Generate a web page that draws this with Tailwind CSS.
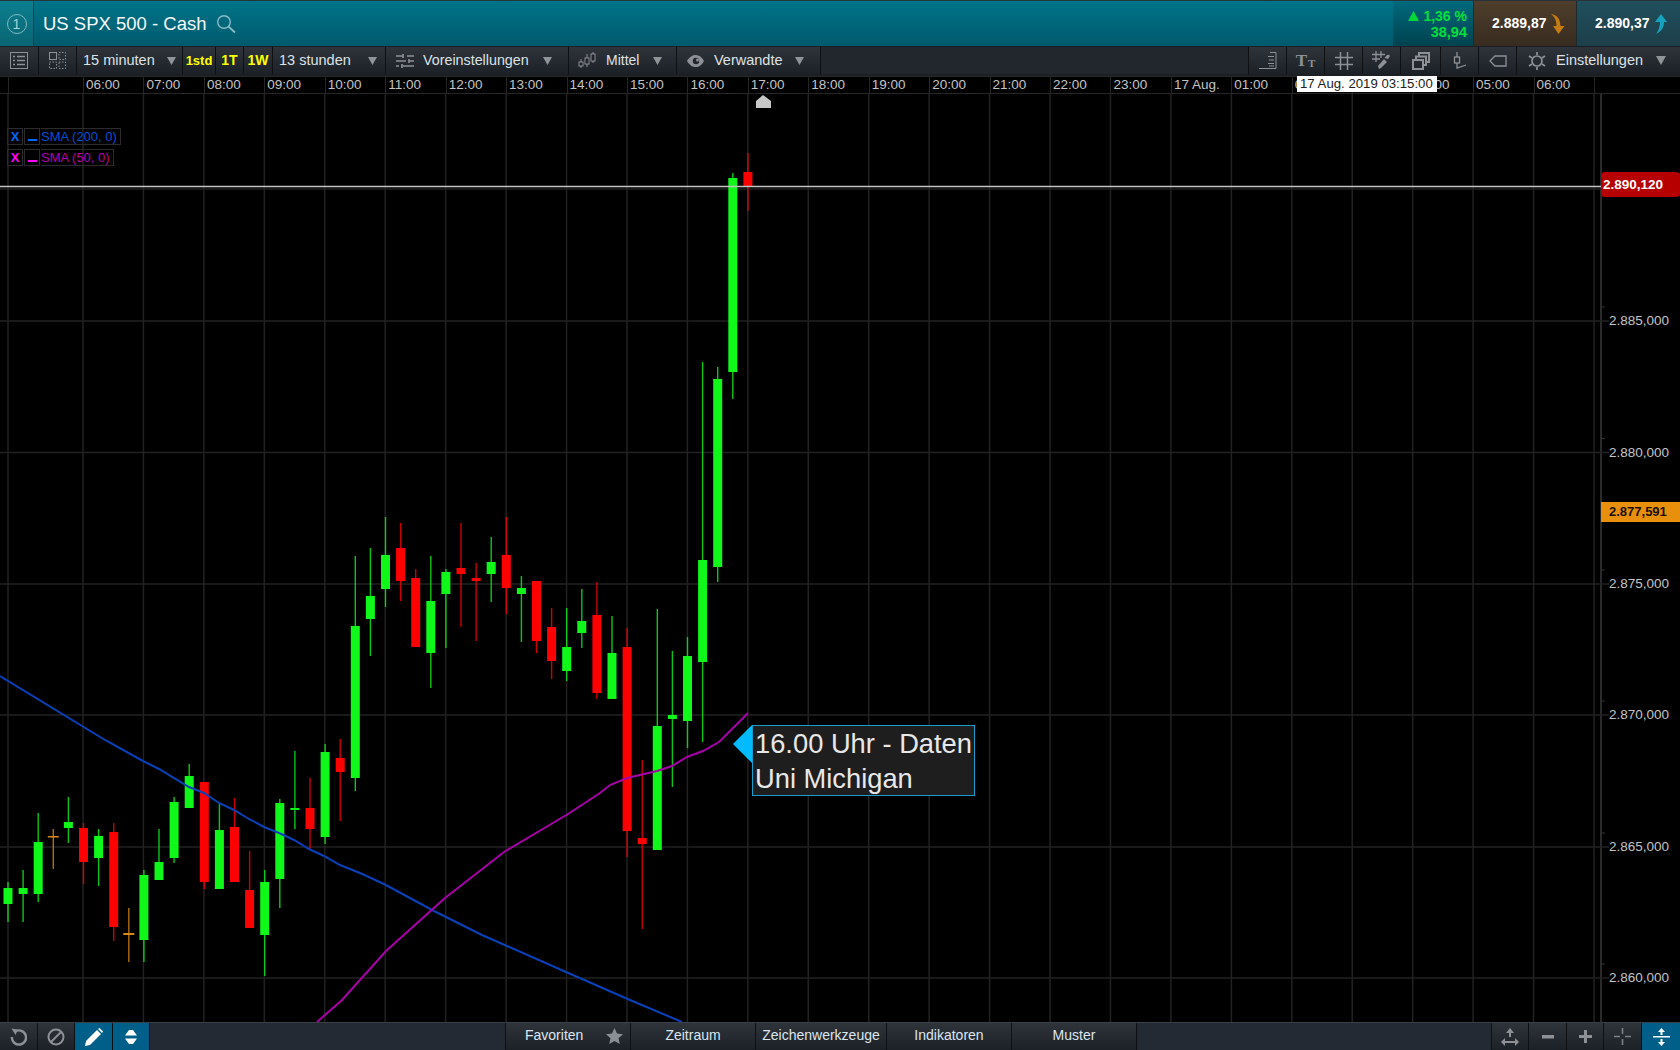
<!DOCTYPE html>
<html lang="de">
<head>
    <meta charset="UTF-8">
    <title>US SPX 500 - Cash</title>
    <script src="https://cdn.jsdelivr.net/npm/@tailwindcss/browser@4"></script>
</head>
<body class="bg-black overflow-hidden font-['Liberation_Sans',Arial,sans-serif]">
<div class="w-[1680px] h-[1050px] flex flex-col">

    <!-- header -->
    <div class="h-[46px] flex border-t border-[#26343a] border-b-[#111] bg-linear-to-b from-[#007489] to-[#005a6d] text-white">
        <div class="w-[34px] flex items-center justify-center border-r border-[#0c3f4b] bg-linear-to-b from-[#0c7f8f] to-[#0a6573]">
            <div class="w-[20px] h-[20px] rounded-full border-[1.5px] border-[#7fb8c0] text-[#a8d2d8] text-[14px] flex items-center justify-center leading-none">1</div>
        </div>
        <div class="pl-[9px] flex items-center text-[18.5px] text-[#f4fafb]">US SPX 500 - Cash</div>
        <svg class="ml-[9px] self-center" width="20" height="20" viewBox="0 0 20 20" fill="none" stroke="#8cbcc4" stroke-width="1.4"><circle cx="8" cy="8" r="6.3"/><path d="M12.6 12.6 L19 18.5" stroke-width="1.8"/></svg>
        <div class="flex-1"></div>
        <div class="w-[81px] flex flex-col justify-center items-end pr-[6px] border-r border-[#1a2a2e] bg-linear-to-b from-[#006a7d] to-[#00424f] text-[#00e03c] font-bold text-[14.5px] leading-[16px]">
            <div class="flex items-center gap-[4px] text-[14px]"><svg width="11" height="10" viewBox="0 0 11 10"><path d="M5.5 0 L11 10 L0 10 Z" fill="#00d838"/></svg>1,36 %</div>
            <div>38,94</div>
        </div>
        <div class="w-[103px] flex items-center pl-[18px] gap-[3px] border-r border-[#1a2a2e] bg-linear-to-b from-[#4e3e2b] to-[#382c20] font-bold text-[14px]">
            2.889,87
            <svg width="15" height="20" viewBox="0 0 15 20"><path d="M1 0 C7 1 10 4 10.5 12 L14.5 12 L8.5 20 L3 12 L6.5 12 C6.5 7 5 3 1 0 Z" fill="#c67c12"/></svg>
        </div>
        <div class="flex-1 max-w-[103px] flex items-center pl-[18px] gap-[4px] bg-linear-to-b from-[#204f5d] to-[#1d3f4a] font-bold text-[14px]">
            2.890,37
            <svg width="13" height="20" viewBox="0 0 13 20"><path d="M7 0 L13 8 L10 8 C10 13 8 17 2 20 C5 16 6 12 6 8 L1 8 Z" fill="#16a3bd"/></svg>
        </div>
    </div>

    <!-- toolbar -->
    <div class="h-[30px] flex pt-[1px] bg-[#1b1f25] border-b-2 border-[#1c2025] text-[14.5px] text-[#dde2e6]">
        <div class="w-[39px] flex items-center justify-center border-r border-[#0d0f12] bg-linear-to-b from-[#2f343b] to-[#1c2027]">
            <svg width="18" height="17" viewBox="0 0 18 17" fill="none" stroke="#8d9196"><rect x="0.5" y="0.5" width="17" height="16"/><path d="M3 4.5h2M7 4.5h8M3 8.5h2M7 8.5h8M3 12.5h2M7 12.5h8" stroke-width="1.4"/></svg>
        </div>
        <div class="w-[38px] flex items-center justify-center border-r border-[#0d0f12] bg-linear-to-b from-[#2f343b] to-[#1c2027]">
            <svg width="17" height="17" viewBox="0 0 17 17" fill="none" stroke="#8d9196"><rect x="0.5" y="0.5" width="7" height="7"/><path d="M10 .5h6.5v7H10zM.5 10h7v6.500H.5zM10 10h6.500v6.500H10z" stroke-dasharray="1.500 1.500"/></svg>
        </div>
        <div class="w-[106px] flex items-center justify-between pl-[6px] pr-[6px] border-r border-[#0d0f12] bg-linear-to-b from-[#2f343b] to-[#1c2027]">
            15 minuten
            <svg width="9" height="8" viewBox="0 0 9 8"><path d="M0 0h9L4.500 8z" fill="#8f9499"/></svg>
        </div>
        <div class="w-[33px] flex items-center justify-center border-r border-[#0d0f12] bg-linear-to-b from-[#2f343b] to-[#1c2027] text-[#ffff00] font-bold text-[13px]">1std</div>
        <div class="w-[28px] flex items-center justify-center border-r border-[#0d0f12] bg-linear-to-b from-[#2f343b] to-[#1c2027] text-[#ffff00] font-bold text-[14px]">1T</div>
        <div class="w-[29px] flex items-center justify-center border-r border-[#0d0f12] bg-linear-to-b from-[#2f343b] to-[#1c2027] text-[#ffff00] font-bold text-[14px]">1W</div>
        <div class="w-[113px] flex items-center justify-between pl-[6px] pr-[8px] border-r border-[#0d0f12] bg-linear-to-b from-[#2f343b] to-[#1c2027]">
            13 stunden
            <svg width="9" height="8" viewBox="0 0 9 8"><path d="M0 0h9L4.500 8z" fill="#8f9499"/></svg>
        </div>
        <div class="w-[183px] flex items-center pl-[10px] gap-[9px] border-r border-[#0d0f12] bg-linear-to-b from-[#2f343b] to-[#1c2027] text-[14.3px]">
            <svg width="18" height="16" viewBox="0 0 18 16" fill="none" stroke="#8d9196" stroke-width="2"><path d="M0 3h7M11 3h7M7 1v4M0 8h10M14 8h4M13 6v4M0 13h3M7 13h11M6 11v4" stroke-width="1.700"/></svg>
            <span>Voreinstellungen</span>
            <svg class="ml-[5px]" width="9" height="8" viewBox="0 0 9 8"><path d="M0 0h9L4.500 8z" fill="#8f9499"/></svg>
        </div>
        <div class="w-[108px] flex items-center pl-[9px] gap-[10px] border-r border-[#0d0f12] bg-linear-to-b from-[#2f343b] to-[#1c2027] text-[14px]">
            <svg width="18" height="17" viewBox="0 0 18 17" fill="none" stroke="#8d9196"><path d="M3 7v9M9 2v13M15 0v11"/><rect x="1" y="10" width="4" height="4" fill="#1f2329"/><rect x="7" y="6" width="4" height="6" fill="#1f2329"/><rect x="13" y="2" width="4" height="7" fill="#1f2329"/></svg>
            <span>Mittel</span>
            <svg class="ml-[4px]" width="9" height="8" viewBox="0 0 9 8"><path d="M0 0h9L4.500 8z" fill="#8f9499"/></svg>
        </div>
        <div class="w-[144px] flex items-center pl-[10px] gap-[10px] border-r border-[#0d0f12] bg-linear-to-b from-[#2f343b] to-[#1c2027]">
            <svg width="17" height="12" viewBox="0 0 17 12"><path d="M0 6 C3 1 6 0 9 0 C12 0 15 2 17 6 C15 10 12 12 9 12 C6 12 3 11 0 6 Z" fill="#8d9196"/><circle cx="9" cy="6" r="3.200" fill="#23272d"/><circle cx="10.500" cy="5" r="1.500" fill="#8d9196"/></svg>
            <span>Verwandte</span>
            <svg class="ml-[2px]" width="9" height="8" viewBox="0 0 9 8"><path d="M0 0h9L4.500 8z" fill="#8f9499"/></svg>
        </div>
        <div class="flex-1 border-r border-[#0d0f12] bg-[#22272e]"></div>
        <div class="w-[38px] flex items-center justify-center border-r border-[#0d0f12] bg-linear-to-b from-[#2f343b] to-[#1c2027]">
            <svg width="18" height="17" viewBox="0 0 18 17" fill="none" stroke="#8d9196"><path d="M0 16.500h17V.500h-6M9 4.500h6M10 8h5M9 11.500h6M10 14h5"/></svg>
        </div>
        <div class="w-[38px] flex items-end justify-center pb-[5px] gap-[1px] border-r border-[#0d0f12] bg-linear-to-b from-[#2f343b] to-[#1c2027] text-[#8d9196] font-bold font-['Liberation_Serif',serif] leading-none">
            <span class="text-[17px]">T</span><span class="text-[11px]">T</span>
        </div>
        <div class="w-[38px] flex items-center justify-center border-r border-[#0d0f12] bg-linear-to-b from-[#2f343b] to-[#1c2027]">
            <svg width="18" height="18" viewBox="0 0 18 18" fill="none" stroke="#8d9196" stroke-width="1.500"><path d="M5.500 0v18M12.500 0v18M0 5.500h18M0 12.500h18"/></svg>
        </div>
        <div class="w-[38px] flex items-center justify-center border-r border-[#0d0f12] bg-linear-to-b from-[#2f343b] to-[#1c2027]">
            <svg width="19" height="19" viewBox="0 0 19 19" fill="none" stroke="#8d9196" stroke-width="1.300"><path d="M4 0v11M9 0v7M0 3.500h13M0 8h8" /><path d="M7 18 L6 15 L12 8 L15 11 L9 17 Z" fill="#8d9196" stroke="none"/><path d="M12.500 7 L15 4 Q17 3 18 5 L16 8 Z" fill="#8d9196" stroke="none"/></svg>
        </div>
        <div class="w-[40px] flex items-center justify-center border-r border-[#0d0f12] bg-linear-to-b from-[#2f343b] to-[#1c2027]">
            <svg width="18" height="18" viewBox="0 0 18 18" fill="none" stroke="#8d9196" stroke-width="2"><rect x="1" y="8" width="10" height="9"/><path d="M4 7V4.500h10V13h-2M7 3.500V1h10v9h-2" /></svg>
        </div>
        <div class="w-[38px] flex items-center justify-center border-r border-[#0d0f12] bg-linear-to-b from-[#2f343b] to-[#1c2027]">
            <svg width="14" height="17" viewBox="0 0 14 17" fill="none" stroke="#8d9196" stroke-width="1.300"><path d="M4 0v5M4 11v5L13 13"/><rect x="1.500" y="5" width="5" height="6"/></svg>
        </div>
        <div class="w-[38px] flex items-center justify-center border-r border-[#0d0f12] bg-linear-to-b from-[#2f343b] to-[#1c2027]">
            <svg width="18" height="12" viewBox="0 0 18 12" fill="none" stroke="#8d9196" stroke-width="1.300"><path d="M17 1H6L1 6l5 5h11z"/></svg>
        </div>
        <div class="flex-1 max-w-[163px] flex items-center pl-[11px] pr-[14px] gap-[10px] bg-linear-to-b from-[#2f343b] to-[#1c2027]">
            <svg width="18" height="18" viewBox="0 0 18 18" fill="none" stroke="#8d9196" stroke-width="1.700"><circle cx="9" cy="9" r="5"/><path d="M9 0v3M9 15v3M1 4l3 2M14 12l3 2M1 14l3-2M14 6l3-2"/></svg>
            <span>Einstellungen</span>
            <div class="ml-auto w-0 h-0 border-x-[5px] border-x-transparent border-t-[9px] border-t-[#8f9499]"></div>
        </div>
    </div>

    <!-- chart -->
    <div class="flex-1 relative flex flex-col min-h-0">
        <div id="timeaxis" class="h-[18px] flex border-y border-[#262626] text-[13.5px] leading-[16px] text-[#c4c4c4]"></div>
        <div class="flex-1 relative min-h-0">
            <svg id="chart" class="absolute inset-0 w-full h-full" viewBox="0 94 1680 928"></svg>

            <!-- legend -->
            <div class="absolute left-[7px] top-[34px] flex flex-col gap-[4px] text-[13px] leading-[15px] font-normal">
                <div class="flex gap-[1px] text-[#0050d8]">
                    <div class="w-[16px] h-[17px] border border-[#2c2c2c] flex items-center justify-center font-bold text-[13px] text-[#0066ff]">X</div>
                    <div class="w-[16px] h-[17px] border border-[#2c2c2c] flex items-end justify-center pb-[3px]"><div class="w-[9px] h-[2px] bg-[#0066ff]"></div></div>
                    <div class="w-[80px] h-[17px] border border-[#2c2c2c] border-l-0 whitespace-nowrap">SMA (200, 0)</div>
                </div>
                <div class="flex gap-[1px] text-[#b400b4]">
                    <div class="w-[16px] h-[17px] border border-[#2c2c2c] flex items-center justify-center font-bold text-[13px] text-[#ff00ff]">X</div>
                    <div class="w-[16px] h-[17px] border border-[#2c2c2c] flex items-end justify-center pb-[3px]"><div class="w-[9px] h-[2px] bg-[#ff00ff]"></div></div>
                    <div class="w-[73px] h-[17px] border border-[#2c2c2c] border-l-0 whitespace-nowrap">SMA (50, 0)</div>
                </div>
            </div>

            <!-- last price tags -->
            <div class="absolute left-[1601px] top-[78px] w-[79px] h-[25px] rounded-[4px] bg-[#b60000] text-white font-bold text-[13.5px] leading-[25px] pl-[2px]">2.890,120</div>
            <div class="absolute left-[1601px] top-[408px] w-[79px] h-[20px] bg-[#e8900c] text-[#1a1206] font-bold text-[13px] leading-[20px] pl-[8px]">2.877,591</div>

            <!-- note -->
            <div class="absolute left-[733px] top-[631px] flex items-start">
                <svg class="mt-0" width="19" height="38" viewBox="0 0 19 38"><path d="M19 0 L0 19 L19 38 Z" fill="#00bbff"/></svg>
                <div class="w-[223px] h-[71px] border-[1.5px] border-[#1a9ccc] bg-[#1e1e1e] text-[#e8e8e8] text-[27.3px] leading-[35px] pl-[2px] whitespace-nowrap">16.00 Uhr - Daten<br>Uni Michigan</div>
            </div>
        </div>

        <!-- crosshair time -->
        <div class="absolute left-[1297px] top-0 w-[140px] h-[16px] bg-white text-[#222] text-[13.2px] leading-[16px] pl-[3px] whitespace-nowrap">17 Aug. 2019 03:15:00</div>
    </div>

    <!-- bottom bar -->
    <div class="h-[28px] flex bg-[#232a33] border-t border-[#3a4048] text-[14px] text-[#dbe6f0]">
        <div class="w-[38px] flex items-center justify-center border-r border-[#0d0f12] bg-linear-to-b from-[#2f343b] to-[#1c2027]">
            <svg width="17" height="18" viewBox="0 0 18 18" fill="none" stroke="#8d9196" stroke-width="2.600"><path d="M5 3.500 A7.500 7.500 0 1 1 2 9"/><path d="M1.500 0 L8 1 L6 7 Z" fill="#8d9196" stroke="none"/></svg>
        </div>
        <div class="w-[37px] flex items-center justify-center border-r border-[#0d0f12] bg-linear-to-b from-[#2f343b] to-[#1c2027]">
            <svg width="18" height="18" viewBox="0 0 18 18" fill="none" stroke="#8d9196" stroke-width="2"><circle cx="9" cy="9" r="7.500"/><path d="M4 14 L14 4"/></svg>
        </div>
        <div class="w-[38px] flex items-center justify-center border-r border-[#0d0f12] bg-[#005f88]">
            <svg width="18" height="18" viewBox="0 0 18 18" fill="#ffffff"><path d="M0 18 L1 13 L12 2 L16 6 L5 17 Z"/><path d="M13 1 L14.500 0 L18 3.500 L17 5 Z"/></svg>
        </div>
        <div class="w-[37px] flex items-center justify-center border-r border-[#0d0f12] bg-[#005f88]">
            <svg width="14" height="14" viewBox="0 0 14 14" fill="#ffffff"><path d="M5 0h4l4 5.500H1z"/><path d="M1 8.500h12L9 14H5z"/></svg>
        </div>
        <div class="w-[355px]"></div>
        <div class="w-[126px] flex items-center pl-[19px] pb-[2px] border-x border-[#0d0f12] bg-linear-to-b from-[#2f343b] to-[#1c2027]">
            Favoriten
            <svg class="ml-[23px]" width="17" height="16" viewBox="0 0 17 16"><path d="M8.500 0 L11 5.500 L17 6.200 L12.500 10.200 L13.800 16 L8.500 13 L3.200 16 L4.500 10.200 L0 6.200 L6 5.500 Z" fill="#8a8f94"/></svg>
        </div>
        <div class="w-[125px] flex items-center justify-center pb-[2px] border-r border-[#0d0f12] bg-linear-to-b from-[#2f343b] to-[#1c2027]">Zeitraum</div>
        <div class="w-[131px] flex items-center justify-center pb-[2px] border-r border-[#0d0f12] bg-linear-to-b from-[#2f343b] to-[#1c2027] whitespace-nowrap">Zeichenwerkzeuge</div>
        <div class="w-[125px] flex items-center justify-center pb-[2px] border-r border-[#0d0f12] bg-linear-to-b from-[#2f343b] to-[#1c2027]">Indikatoren</div>
        <div class="w-[125px] flex items-center justify-center pb-[2px] border-r border-[#0d0f12] bg-linear-to-b from-[#2f343b] to-[#1c2027]">Muster</div>
        <div class="flex-1"></div>
        <div class="w-[38px] flex items-center justify-center border-x border-[#0d0f12] bg-linear-to-b from-[#2f343b] to-[#1c2027]">
            <svg width="18" height="18" viewBox="0 0 18 18" fill="#8d9196"><path d="M9 0 L13 5 L10 5 L10 9 L8 9 L8 5 L5 5 Z"/><path d="M0 14 L4 10 L4 13 L14 13 L14 10 L18 14 L14 18 L14 15 L4 15 L4 18 Z"/></svg>
        </div>
        <div class="w-[38px] flex items-center justify-center border-r border-[#0d0f12] bg-linear-to-b from-[#2f343b] to-[#1c2027]">
            <svg width="12" height="4" viewBox="0 0 12 4" fill="#8d9196"><rect width="12" height="3.500"/></svg>
        </div>
        <div class="w-[37px] flex items-center justify-center border-r border-[#0d0f12] bg-linear-to-b from-[#2f343b] to-[#1c2027]">
            <svg width="13" height="13" viewBox="0 0 13 13" fill="#8d9196"><path d="M5 0h3v5h5v3H8v5H5V8H0V5h5z"/></svg>
        </div>
        <div class="w-[38px] flex items-center justify-center border-r border-[#0d0f12] bg-linear-to-b from-[#2f343b] to-[#1c2027]">
            <svg width="17" height="17" viewBox="0 0 17 17" fill="none" stroke="#7d8186" stroke-width="1.600"><path d="M8.500 0v6M8.500 11v6M0 8.500h6M11 8.500h6"/></svg>
        </div>
        <div class="w-[38px] flex items-center justify-center bg-[#005f88]">
            <svg width="17" height="18" viewBox="0 0 17 18" fill="#ffffff"><path d="M8.500 0 L12 4 L9.500 4 L9.500 7 L7.500 7 L7.500 4 L5 4 Z"/><rect y="8" width="17" height="1.500"/><path d="M7.500 11 L9.500 11 L9.500 14 L12 14 L8.500 18 L5 14 L7.500 14 Z"/></svg>
        </div>
    </div>
</div>

<script>
    // grid: one column per hour, 60.44px apart, starting at x=83
    const GRID_X0 = 83, GRID_DX = 60.44;
    const hours = ['06:00','07:00','08:00','09:00','10:00','11:00','12:00','13:00','14:00','15:00','16:00','17:00','18:00','19:00','20:00','21:00','22:00','23:00','17 Aug.','01:00','02:00','03:00','04:00','05:00','06:00'];

    let axis = '<div class="w-[8px] shrink-0"></div><div class="w-[75px] shrink-0 border-l border-[#262626]"></div>';
    hours.forEach(h => {
        axis += '<div class="w-[60.44px] shrink-0 pl-[2px] border-l border-[#262626] whitespace-nowrap">' + h + '</div>';
    });
    axis += '<div class="flex-1 border-l border-[#262626]"></div>';
    document.getElementById('timeaxis').innerHTML = axis;

    // [wickTop, bodyTop, bodyBottom, wickBottom, colour]
    const G = '#0ff81a', R = '#ff0000', O = '#d98a10';
    const candles = [
        [882,888,904,922,G],[870,888,894,922,G],[813,842,894,902,G],[829,836,837,869,O],[797,822,828,843,G],
        [823,828,862,884,R],[829,836,858,886,G],[823,832,927,941,R],[908,933,935,962,O],[870,875,940,962,G],
        [829,862,880,880,G],[797,802,858,863,G],[764,776,808,808,G],[782,782,882,889,R],[804,830,889,889,G],
        [798,827,882,882,R],[851,890,928,928,R],[870,882,935,976,G],[799,803,879,908,G],[751,808,810,829,G],
        [778,808,829,849,R],[744,752,837,844,G],[739,758,772,821,R],[556,626,778,791,G],[548,596,619,656,G],
        [517,555,589,607,G],[523,548,581,601,R],[569,578,647,647,R],[556,601,653,688,G],[569,572,594,648,G],
        [523,568,574,627,R],[563,578,581,641,R],[537,562,574,602,G],[517,555,588,614,R],[576,588,594,642,G],
        [581,581,641,653,R],[608,627,661,679,R],[608,647,671,681,G],[589,621,633,648,G],[582,615,693,699,R],
        [616,653,699,699,G],[628,647,831,857,R],[760,838,844,929,R],[609,726,850,850,G],[651,715,719,787,G],
        [637,656,721,748,G],[362,560,662,742,G],[367,379,567,582,G],[173,178,372,399,G],[153,172,186,211,R]
    ];

    const blue = '0,676 105,740 143,761 159,769 189,787 204,793 219,803 234,810 249,819 264,827 279,833 294,840 309,849 324,856 340,865 360,873 384,884 434,911 482,935 566,972 630,1000 682,1022';
    const purple = '317,1022 342,1000 386,951 445,898 504,852 568,814 600,793 610,785 627,778 657,771 672,766 687,757 703,751 719,742 748,713';

    let s = '';
    // vertical grid
    s += '<line x1="8" x2="8" y1="94" y2="1022" stroke="#222" stroke-width="1.500"/>';
    for (let i = 0; i <= 25; i++) {
        const x = GRID_X0 + i * GRID_DX;
        s += `<line x1="${x}" x2="${x}" y1="94" y2="1022" stroke="#222" stroke-width="1.500"/>`;
    }
    s += '<line x1="1601" x2="1601" y1="94" y2="1022" stroke="#2a2a2a" stroke-width="2"/>';

    // horizontal grid + price labels
    const levels = [[189,null],[321,'2.885,000'],[452.500,'2.880,000'],[584,'2.875,000'],[715,'2.870,000'],[847,'2.865,000'],[978,'2.860,000']];
    levels.forEach(([y, label]) => {
        s += `<line x1="0" x2="1609" y1="${y}" y2="${y}" stroke="#222" stroke-width="1.500"/>`;
        if (label) {
            s += `<line x1="1601" x2="1605" y1="${y - 14}" y2="${y - 14}" stroke="#333"/>`;
            s += `<text x="1609" y="${y + 4}" fill="#c4c4c4" font-size="13.500">${label}</text>`;
        }
    });

    // candles, 15.100px apart
    candles.forEach((c, i) => {
        const x = 8 + i * 15.1;
        s += `<rect x="${x - 0.7}" y="${c[0]}" width="1.400" height="${c[3] - c[0]}" fill="${c[4]}" opacity="0.8"/>`;
        const w = c[4] === O ? 11 : 9;
        s += `<rect x="${x - w / 2}" y="${c[1]}" width="${w}" height="${Math.max(c[2] - c[1], 1.500)}" fill="${c[4]}"/>`;
    });

    // moving averages
    s += `<polyline points="${blue}" fill="none" stroke="#0a40b8" stroke-width="2"/>`;
    s += `<polyline points="${purple}" fill="none" stroke="#a800a8" stroke-width="2"/>`;

    // last price line and "now" marker
    s += '<line x1="0" x2="1601" y1="186.500" y2="186.500" stroke="#c4c4c4" stroke-width="1.500"/>';
    s += '<path d="M756 108 L756 101 L763 95 L771 101 L771 108 Z" fill="#c8c8c8"/>';

    document.getElementById('chart').innerHTML = s;
</script>
</body>
</html>
